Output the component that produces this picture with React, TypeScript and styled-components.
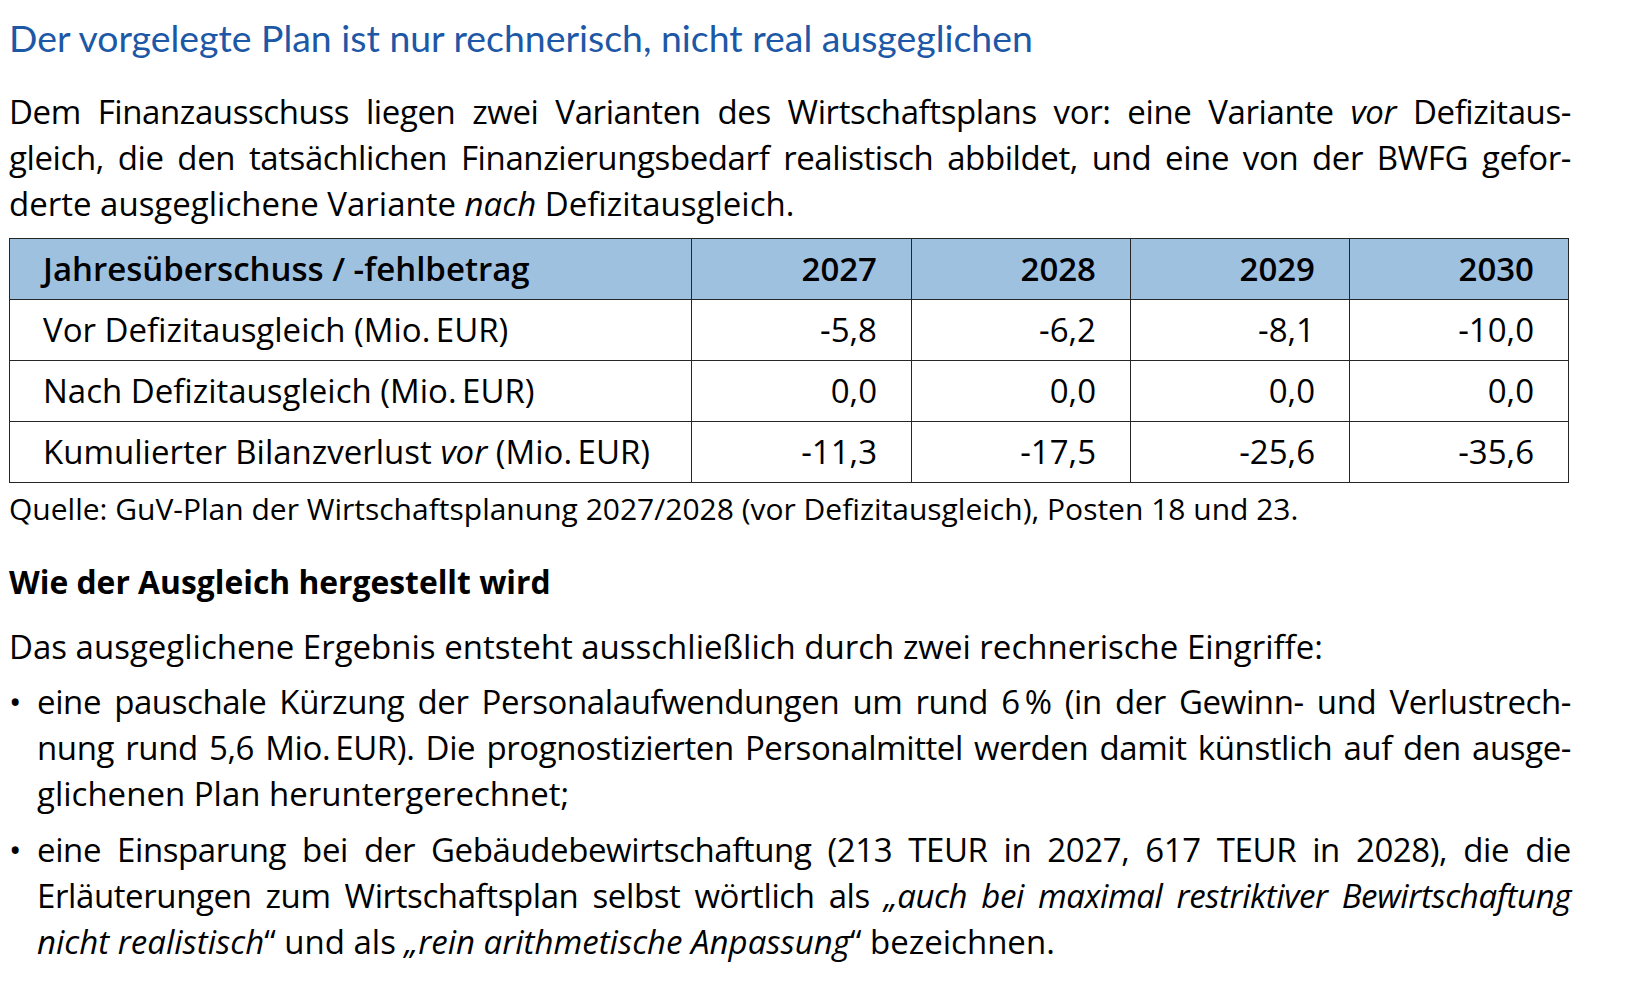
import React from "react";
import styled, { createGlobalStyle } from "styled-components";

const GlobalStyle = createGlobalStyle`
  body {
    margin: 0;
    background: #ffffff;
    color: #000000;
    font-family: "Open Sans", "Noto Sans", sans-serif;
  }
`;

const Page = styled.main`
  width: 1562px;
  padding: 14px 0 0 9px;
`;

const Title = styled.h1`
  margin: 0;
  font-family: "Lato", "Open Sans", sans-serif;
  font-weight: 400;
  font-size: 37.4px;
  line-height: 48px;
  color: #1d58a6;
  white-space: nowrap;
`;

const Paragraph = styled.div<{ $top: number }>`
  margin-top: ${(p) => p.$top}px;
  font-size: 33px;
  line-height: 46px;
`;

const Line = styled.div<{ $last?: boolean }>`
  text-align: ${(p) => (p.$last ? "left" : "justify")};
  text-align-last: ${(p) => (p.$last ? "left" : "justify")};
  letter-spacing: ${(p) => (p.$last ? "0" : "-0.4px")};
`;

const Table = styled.table`
  margin-top: 11px;
  width: 1559px;
  border-collapse: collapse;
  table-layout: fixed;
  font-size: 33px;
  line-height: 40px;
`;

const HeadCell = styled.th<{ $num?: boolean }>`
  height: 60px;
  padding: 0 ${(p) => (p.$num ? "34px" : "0")} 0 ${(p) => (p.$num ? "0" : "33px")};
  background: #9fc1e0;
  border: 1.5px solid #262626;
  font-weight: 600;
  text-align: ${(p) => (p.$num ? "right" : "left")};
  white-space: nowrap;
`;

const Cell = styled.td<{ $num?: boolean }>`
  height: 60px;
  padding: 0 ${(p) => (p.$num ? "34px" : "0")} 0 ${(p) => (p.$num ? "0" : "33px")};
  border: 1.5px solid #262626;
  text-align: ${(p) => (p.$num ? "right" : "left")};
  white-space: nowrap;
`;

const Source = styled.p`
  margin: 6px 0 0;
  font-size: 30px;
  line-height: 40px;
  white-space: nowrap;
`;

const Heading = styled.h2`
  margin: 33px 0 0;
  font-size: 31.8px;
  line-height: 40px;
  font-weight: 700;
`;

const List = styled.ul`
  margin: 9px 0 0;
  padding: 0;
  list-style: none;
  font-size: 33px;
  line-height: 46px;
`;

const Item = styled.li`
  display: flex;
  & + & {
    margin-top: 10px;
  }
`;

const Bullet = styled.span`
  flex: 0 0 28px;
`;

const ItemText = styled.div`
  flex: 1;
  min-width: 0;
`;

const NB = "\u2009";

const years = ["2027", "2028", "2029", "2030"];

const rows: { label: React.ReactNode; values: string[] }[] = [
  { label: <>Vor Defizitausgleich (Mio.{NB}EUR)</>, values: ["-5,8", "-6,2", "-8,1", "-10,0"] },
  { label: <>Nach Defizitausgleich (Mio.{NB}EUR)</>, values: ["0,0", "0,0", "0,0", "0,0"] },
  {
    label: (
      <>
        Kumulierter Bilanzverlust <em>vor</em> (Mio.{NB}EUR)
      </>
    ),
    values: ["-11,3", "-17,5", "-25,6", "-35,6"],
  },
];

export default function App() {
  return (
    <Page>
      <GlobalStyle />
      <Title>Der vorgelegte Plan ist nur rechnerisch, nicht real ausgeglichen</Title>

      <Paragraph $top={26.5}>
        <Line>
          Dem Finanzausschuss liegen zwei Varianten des Wirtschaftsplans vor: eine Variante <em>vor</em> Defizitaus-
        </Line>
        <Line>
          gleich, die den tatsächlichen Finanzierungsbedarf realistisch abbildet, und eine von der BWFG gefor-
        </Line>
        <Line $last>
          derte ausgeglichene Variante <em>nach</em> Defizitausgleich.
        </Line>
      </Paragraph>

      <Table>
        <colgroup>
          <col style={{ width: 682 }} />
          <col style={{ width: 220 }} />
          <col style={{ width: 219 }} />
          <col style={{ width: 219 }} />
          <col style={{ width: 219 }} />
        </colgroup>
        <thead>
          <tr>
            <HeadCell>Jahresüberschuss / -fehlbetrag</HeadCell>
            {years.map((y) => (
              <HeadCell key={y} $num>
                {y}
              </HeadCell>
            ))}
          </tr>
        </thead>
        <tbody>
          {rows.map((r, i) => (
            <tr key={i}>
              <Cell>{r.label}</Cell>
              {r.values.map((v, j) => (
                <Cell key={j} $num>
                  {v}
                </Cell>
              ))}
            </tr>
          ))}
        </tbody>
      </Table>

      <Source>
        Quelle: GuV-Plan der Wirtschaftsplanung 2027/2028 (vor Defizitausgleich), Posten 18 und 23.
      </Source>

      <Heading>Wie der Ausgleich hergestellt wird</Heading>

      <Paragraph $top={22}>
        <Line $last>
          Das ausgeglichene Ergebnis entsteht ausschließlich durch zwei rechnerische Eingriffe:
        </Line>
      </Paragraph>

      <List>
        <Item>
          <Bullet>•</Bullet>
          <ItemText>
            <Line>
              eine pauschale Kürzung der Personalaufwendungen um rund 6{NB}% (in der Gewinn- und Verlustrech-
            </Line>
            <Line>
              nung rund 5,6 Mio.{NB}EUR). Die prognostizierten Personalmittel werden damit künstlich auf den ausge-
            </Line>
            <Line $last>glichenen Plan heruntergerechnet;</Line>
          </ItemText>
        </Item>
        <Item>
          <Bullet>•</Bullet>
          <ItemText>
            <Line>
              eine Einsparung bei der Gebäudebewirtschaftung (213 TEUR in 2027, 617 TEUR in 2028), die die
            </Line>
            <Line>
              Erläuterungen zum Wirtschaftsplan selbst wörtlich als{" "}
              <em>„auch bei maximal restriktiver Bewirtschaftung</em>
            </Line>
            <Line $last>
              <em>nicht realistisch</em>“ und als <em>„rein arithmetische Anpassung</em>“ bezeichnen.
            </Line>
          </ItemText>
        </Item>
      </List>
    </Page>
  );
}
